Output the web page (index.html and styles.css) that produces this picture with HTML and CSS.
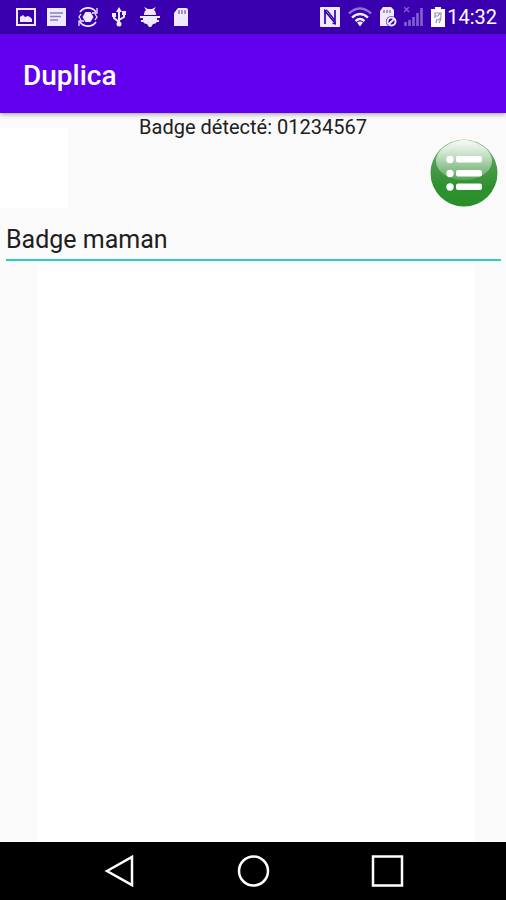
FILE: index.html
```html
<!DOCTYPE html>
<html lang="fr">
<head>
<meta charset="utf-8">
<meta name="viewport" content="width=device-width, initial-scale=1">
<title>Duplica</title>
<link rel="stylesheet" href="styles.css">
</head>
<body>
<div class="status-bar">
  <div class="notifications">
    <svg width="20" height="20" viewBox="0 0 20 20"><path fill="#efeaff" fill-rule="evenodd" d="M0 1h20v18H0zM2 3v14h16V3z"/><path fill="#efeaff" d="M4 15V10l3-2 2 2 3-1 2 1 2 2v3z"/></svg>
    <svg width="20" height="20" viewBox="0 0 20 20"><path fill="#efeaff" d="M0 1h19v18H0z"/><path stroke="#8b7cc9" stroke-width="1.4" d="M3 6h13M3 9.5h11M3 13h8"/></svg>
    <svg width="20" height="20" viewBox="0 0 20 20"><g fill="none" stroke="#efeaff" stroke-width="1.800"><path d="M2 5C6-.5 14-.5 18 5M18 15c-4 5.500-12 5.500-16 0"/><path stroke-width="1.300" d="M19 1v5h-5M1 19v-5h5M3 7L1 10l2 3M17 7l2 3-2 3"/></g><path fill="#efeaff" d="M7.500 5h5l3 5-3 5h-5l-3-5z"/></svg>
    <svg width="20" height="20" viewBox="0 0 20 20"><path fill="none" stroke="#efeaff" stroke-width="2" d="M10 3v14M5 8v3l5 4M15 6v4l-5 3"/><path fill="#efeaff" d="M10 0l3 5H7zM3 6h4v4H3zM13 4h4v4h-4z"/><circle cx="10" cy="17" r="2.5" fill="#efeaff"/></svg>
    <svg width="20" height="20" viewBox="0 0 20 20"><path fill="#efeaff" d="M4 8c0-3 1-4 2-5L4 0l4 2h4l4-2-2 3c1 1 2 2 2 5zM3 9h14v5c0 2-2 3-4 3l-2 3H9l-2-3c-2 0-4-1-4-3z"/><path stroke="#efeaff" stroke-width="2" d="M0 10h20M1 14h18"/></svg>
    <svg width="20" height="20" viewBox="0 0 20 20"><path fill="#efeaff" d="M7 1h8q2 0 2 2v16H3V6z"/><path stroke="#8b7cc9" stroke-width="1.6" d="M8 3v4M11 3v4M14 3v4"/></svg>
  </div>
  <div class="system">
    <svg width="22" height="20" viewBox="0 0 22 20"><rect x="1" width="20" height="20" rx="1" fill="#efeaff"/><path fill="none" stroke="#3a00b0" stroke-width="1.700" d="M6 17V4l10 12V3"/><path stroke="#3a00b0" stroke-width="1.300" d="M5 3.500h3.500M13.500 16.500H17M8.500 4l7 9"/></svg>
    <svg width="24" height="20" viewBox="0 0 24 20"><g fill="none" stroke-width="2.400"><path stroke="#8e72d5" d="M1 6.500q11-10 22 0"/><path stroke="#efeaff" d="M4 10.500q8-7 16 0M7.500 14q4.500-4 9 0"/></g><path fill="#efeaff" d="M9 15.500q3-2 6 0l-3 4z"/></svg>
    <svg width="18" height="20" viewBox="0 0 18 20"><path fill="#efeaff" d="M4 0h8l3 3v16H1V4z"/><path stroke="#8b7cc9" stroke-width="1.5" d="M5 3v3M8 3v3M11 3v3"/><circle cx="12.500" cy="14.500" r="5.500" fill="#3a00b0"/><circle cx="12.500" cy="14.500" r="4" fill="none" stroke="#efeaff" stroke-width="2"/><path stroke="#efeaff" stroke-width="1.8" d="M10 17l5-5"/></svg>
    <svg width="20" height="20" viewBox="0 0 20 20"><path stroke="#8063cd" stroke-width="2.6" d="M1.500 19v-4M5.500 19v-6M9.500 19v-9M13.500 19V6M17.500 19V1"/><path stroke="#8063cd" stroke-width="1.3" d="M0 0l5 5M5 0L0 5"/></svg>
    <div class="clock">
      <svg width="14" height="20" viewBox="0 0 14 20"><path fill="#fff" d="M4 0h6v2h4v18H0V2h4z"/><path fill="none" stroke="#9b8bb5" stroke-width="1.2" d="M4 11V6h6v5l-3 2M4 9h3M6 12l-1 4M9 6L7 9M10 12l-2 4"/></svg>
      <time datetime="14:32">14:32</time>
    </div>
  </div>
</div>
<header class="app-bar"><h1>Duplica</h1></header>
<main class="content">
  <section class="detection">
    <div class="thumbnail"></div>
    <p>Badge détecté: 01234567</p>
    <button class="list-button" type="button" aria-label="Liste des badges">
      <svg width="68" height="68" viewBox="0 0 68 68">
        <defs>
          <linearGradient id="base" x2="0" y2="1"><stop stop-color="#8fbd8e"/><stop offset=".35" stop-color="#4d9e4d"/><stop offset=".7" stop-color="#2f902f"/><stop offset="1" stop-color="#28902a"/></linearGradient>
          <linearGradient id="gloss" x2="0" y2="1"><stop stop-color="#fff" stop-opacity=".92"/><stop offset=".4" stop-color="#fff" stop-opacity=".62"/><stop offset="1" stop-color="#fff" stop-opacity=".16"/></linearGradient>
        </defs>
        <circle cx="34" cy="34" r="33.500" fill="url(#base)"/>
        <path d="M34 1C46 1 62 10 62 22C62 33 49 41 34 41S6 33 6 22C6 10 22 1 34 1z" fill="url(#gloss)"/>
        <g fill="#fff"><circle cx="20" cy="20.500" r="3.700"/><circle cx="20" cy="34.500" r="3.700"/><circle cx="20" cy="48" r="3.700"/><rect x="26" y="17" width="26" height="6.500" rx="2"/><rect x="26" y="31" width="26" height="6.500" rx="2"/><rect x="26" y="44.500" width="26" height="6.500" rx="2"/></g>
      </svg>
    </button>
  </section>
  <input class="badge-name" type="text" value="Badge maman" aria-label="Nom du badge">
  <div class="panel"></div>
</main>
<nav class="nav-bar">
  <button type="button" aria-label="Retour"><svg width="34" height="34" viewBox="0 0 34 34"><path d="M5 17L30 3v28z"/></svg></button>
  <button type="button" aria-label="Accueil"><svg width="34" height="34" viewBox="0 0 34 34"><circle cx="17.500" cy="17" r="14.500"/></svg></button>
  <button type="button" aria-label="Applications récentes"><svg width="34" height="34" viewBox="0 0 34 34"><path d="M3 2.500h29v29H3z"/></svg></button>
</nav>
</body>
</html>
```
FILE: styles.css
```css
* { box-sizing: border-box; }
body {
  margin: 0;
  min-height: 100vh;
  display: flex;
  flex-direction: column;
  background: #fafafa;
  color: #202020;
  font-family: Roboto, sans-serif;
}
svg { display: block; flex: none; }
button { padding: 0; border: 0; background: none; }
.status-bar {
  display: flex;
  justify-content: space-between;
  align-items: center;
  height: 34px;
  padding: 0 9px 0 16px;
  background: #3a00b0;
  color: #fff;
  font-size: 20px;
}
.notifications { display: flex; gap: 11px; }
.system { display: flex; align-items: center; gap: 7px; }
.clock { display: flex; align-items: center; gap: 2px; }
.app-bar {
  display: flex;
  align-items: center;
  height: 79px;
  padding: 3px 23px 0;
  background: #6200ee;
  box-shadow: 0 1px 5px rgba(0, 0, 0, 0.4);
  color: #fff;
}
h1 { margin: 0; font-size: 28px; font-weight: 500; }
.content { flex: 1; display: flex; flex-direction: column; }
.detection {
  display: grid;
  grid-template-columns: 68px 1fr 68px;
  padding: 2px 8px 0 0;
}
.detection p {
  margin: 0;
  padding-left: 8px;
  font-size: 20px;
  line-height: 24px;
  text-align: center;
}
.thumbnail { height: 80px; margin-top: 13px; background: #fff; }
.list-button { height: 68px; margin-top: 24px; border-radius: 50%; }
.badge-name {
  height: 44px;
  margin: 9px 5px 0 6px;
  padding: 2px 0 0;
  border: 0;
  border-bottom: 2px solid #2bd0bd;
  outline: 0;
  background: transparent;
  color: #202020;
  font: 25px Roboto, sans-serif;
}
.panel { flex: 1; margin: 4px 31px 0 37px; background: #fff; }
.nav-bar {
  display: flex;
  justify-content: center;
  align-items: center;
  gap: 100px;
  height: 58px;
  background: #000;
}
.nav-bar svg { fill: none; stroke: #fff; stroke-width: 2.5; }
```
